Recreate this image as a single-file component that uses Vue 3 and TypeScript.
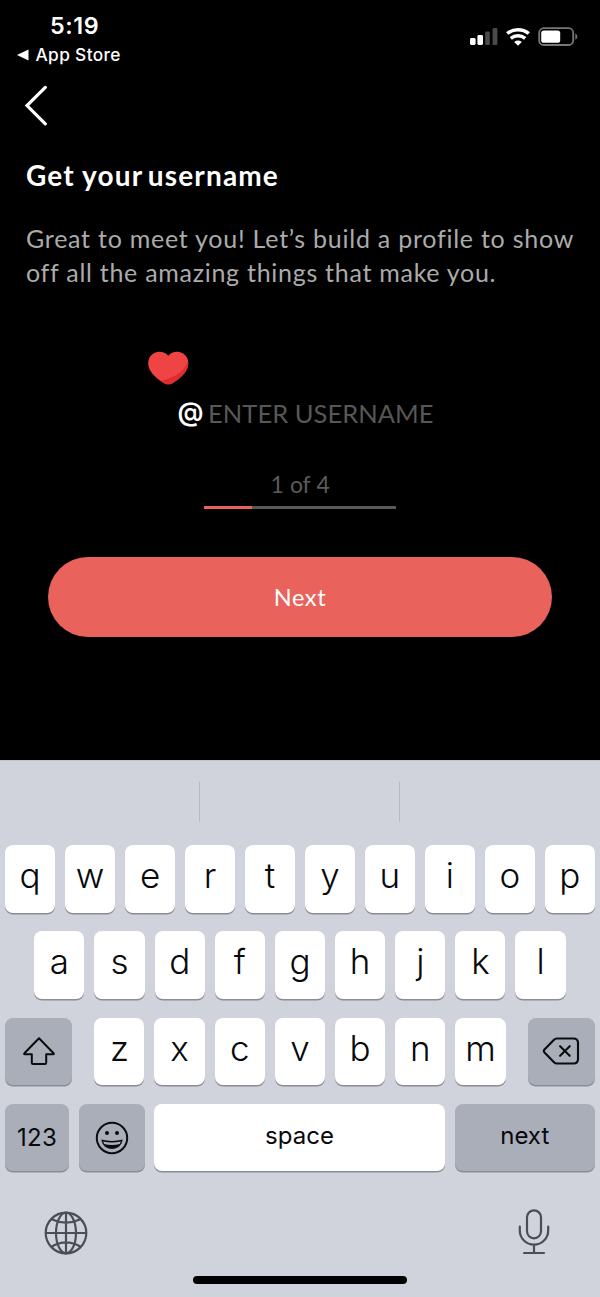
<script setup lang="ts">
const rowTop: string[] = 'qwertyuiop'.split('')
const rowHome: string[] = 'asdfghjkl'.split('')
const rowBottom: string[] = 'zxcvbnm'.split('')
const step = 1
const steps = 4
</script>

<template>
  <div class="screen">
    <main class="app">
      <header class="status">
        <div class="left">
          <div class="time">5:19</div>
          <div class="return">
            <svg width="12" height="12" viewBox="0 0 12 12"><path d="M0 6 11.5 .4V11.6Z" fill="#fff" /></svg>
            <span>App Store</span>
          </div>
        </div>
        <svg class="indicators" width="112" height="24" viewBox="0 0 112 24">
          <rect x="2" y="14" width="5.6" height="7" rx="1.4" fill="#fff" />
          <rect x="9.4" y="11" width="5.6" height="10" rx="1.4" fill="#fff" />
          <rect x="17.2" y="7.5" width="4.6" height="13.5" rx="1.2" fill="#4a4a4a" />
          <rect x="24.6" y="4" width="4.8" height="17" rx="1.2" fill="#4a4a4a" />
          <g fill="none" stroke="#fff" stroke-width="3.5">
            <path d="M39.2 9.5a17.2 17.2 0 0 1 21.6 0" />
            <path d="M42.8 14.3a11.6 11.6 0 0 1 14.4 0" />
          </g>
          <path d="M46.200 17.900a6.400 6.400 0 0 1 7.600 0L50 21.800Z" fill="#fff" />
          <rect x="71.200" y="4.200" width="34" height="16.800" rx="4.600" fill="none" stroke="#777" stroke-width="1.800" />
          <rect x="73.200" y="6.600" width="19" height="12.200" rx="2.600" fill="#fff" />
          <path d="M107.300 9.400c2.600 1.200 2.600 5.200 0 6.400Z" fill="#777" />
        </svg>
      </header>

      <svg class="back" width="24" height="42" viewBox="0 0 24 42">
        <path d="M21.300 3.400 3 21.600 21.300 39.800" fill="none" stroke="#fff" stroke-width="3.200" stroke-linecap="round" />
      </svg>

      <h1><span class="get">Get your</span><span class="name">username</span></h1>
      <p class="intro"><span class="l1">Great to meet you! Let’s build a profile to show</span><span class="l2">off all the amazing things that make you.</span></p>

      <svg class="heart" width="42" height="36" viewBox="0 0 42 36">
        <path d="M21.300 4.800C25 .2 31.500-.2 36.200 2.600 41.600 6 42.500 13 39.800 18.500 36.800 24.500 30.500 29.500 25 32.400Q21.300 34.200 17.600 32.400C12 29.500 5.700 24.500 2.700 18.500 0 13 .9 6 6.300 2.600 11-.2 17.500.2 21.300 4.800Z" fill="#f04444" />
        <path d="M40.900 9.500C38.500 19.500 29 26 14 30.200L17.600 32.400Q21.300 34.200 25 32.400C30.500 29.500 36.800 24.500 39.800 18.500 41.200 15.600 41.600 12.400 40.900 9.500Z" fill="#de2c30" />
      </svg>

      <div class="field"><span class="at">@</span><span class="placeholder">ENTER USERNAME</span></div>

      <div class="counter">{{ step }} of {{ steps }}</div>
      <div class="track"><div class="fill" :style="{ width: (step / steps) * 100 + '%' }"></div></div>
      <button class="cta">Next</button>
    </main>

    <section class="keyboard">
      <div class="suggestions"><i></i><i></i><i></i></div>
      <div class="row r1"><div v-for="k in rowTop" :key="k" class="key">{{ k }}</div></div>
      <div class="row r2"><div v-for="k in rowHome" :key="k" class="key">{{ k }}</div></div>
      <div class="row r3">
        <div class="key dark wide">
          <svg width="34" height="30" viewBox="0 0 34 30"><path d="M17 2.200 31.600 17.300q.8 1-.5 1H24.200V26.800q0 1.300-1.300 1.300H11.100q-1.300 0-1.300-1.300V18.300H2.900q-1.300 0-.5-1Z" fill="none" stroke="#0b0c0f" stroke-width="2" stroke-linejoin="round" /></svg>
        </div>
        <div class="letters"><div v-for="k in rowBottom" :key="k" class="key">{{ k }}</div></div>
        <div class="key dark wide">
          <svg width="38" height="30" viewBox="0 0 38 30"><g fill="none" stroke="#0b0c0f" stroke-width="2.100" stroke-linejoin="round" stroke-linecap="round"><path d="M15 2.500H31.500q4.500 0 4.500 4.500v16q0 4.500-4.500 4.500H15q-1.800 0-3-1.200L2.500 16.500q-1.400-1.500 0-3l9.500-9.800q1.200-1.200 3-1.200Z" /><path d="m18.100 10.200 9.600 9.600m0-9.600-9.600 9.600" /></g></svg>
        </div>
      </div>
      <div class="row r4">
        <div class="key dark word num">123</div>
        <div class="key dark emoji">
          <svg width="34" height="34" viewBox="0 0 34 34"><circle cx="17" cy="17" r="15.200" fill="none" stroke="#0b0c0f" stroke-width="2" /><circle cx="12" cy="12" r="2" fill="#0b0c0f" /><circle cx="22" cy="12" r="2" fill="#0b0c0f" /><path d="M6.400 18.600Q17 21.400 27.600 18.600C27 24.500 22.500 28 17 28S7 24.500 6.400 18.600Z" fill="#0b0c0f" /><path d="M8.200 20.500Q17 22.600 25.800 20.500L24.800 22.900Q17 24.900 9.200 22.900Z" fill="#aaaeb9" /></svg>
        </div>
        <div class="key word space">space</div>
        <div class="key dark word next">next</div>
      </div>
      <div class="tools">
        <svg width="44" height="44" viewBox="0 0 44 44"><g fill="none" stroke="#4c4e57" stroke-width="2.200"><circle cx="22" cy="22" r="20.300" /><ellipse cx="22" cy="22" rx="10" ry="20.300" /><path d="M22 1.700V42.300M1.700 22H42.300M7.500 8.300Q22 15 36.500 8.300M7.500 35.700Q22 27 36.500 35.700" /></g></svg>
        <svg width="32" height="46" viewBox="0 0 32 46"><g fill="none" stroke="#4c4e57" stroke-width="2.200" stroke-linecap="round"><rect x="9" y="1.300" width="14" height="28" rx="7" /><path d="M1.800 17.500V21.500a14.200 14.200 0 0 0 28.400 0V17.500M16 35.700V44M6 44H26" /></g></svg>
      </div>
      <div class="home"></div>
    </section>
  </div>
</template>

<style>
body { margin: 0; background: #000; }
</style>

<style scoped>
.screen { width: 600px; height: 1297px; overflow: hidden; }
.screen * { box-sizing: border-box; }
svg { display: block; flex: none; }
.app { height: 760px; background: #000; color: #fff; font-family: Lato, "Open Sans", sans-serif; display: flex; flex-direction: column; white-space: nowrap; }
.status { height: 84px; display: flex; justify-content: space-between; padding: 12px 20px 0 17px; font-family: Inter, sans-serif; }
.time { margin-left: 33px; font-size: 23.300px; line-height: 27px; font-weight: 600; letter-spacing: .6px; }
.return { display: flex; align-items: center; gap: 6.500px; margin-top: 5px; font-size: 17.300px; line-height: 22px; font-weight: 500; letter-spacing: .35px; }
.indicators { margin-top: 12px; }
.back { margin: 0 0 0 24px; }
h1 { margin: 32px 0 0 26px; font-size: 28px; line-height: 34px; font-weight: 700; display: flex; gap: 4.500px; }
.get { letter-spacing: 1.150px; }
.name { letter-spacing: 1.150px; }
.intro { margin: 29px 0 0 26px; font-size: 25px; line-height: 34.300px; color: #ababab; }
.intro span { display: block; }
.l1 { letter-spacing: .750px; }
.l2 { letter-spacing: .720px; }
.heart { margin: 61px 0 0 147px; }
.field { height: 34px; margin: 9.400px 0 0 177.500px; display: flex; line-height: 34px; font-size: 25.500px; }
.at { width: 30.500px; font-family: Inter, sans-serif; font-weight: 600; font-size: 26px; line-height: 32px; }
.placeholder { color: #575757; letter-spacing: .05px; }
.counter { margin-top: 40px; text-align: center; font-size: 23px; line-height: 28px; color: #5b5b5b; letter-spacing: -.3px; word-spacing: 1px; }
.track { width: 192px; height: 3px; margin: 8px auto 0; background: #585858; }
.fill { height: 3px; background: #e9625c; }
.cta { width: 504px; height: 80px; margin: 48px auto 0; padding: 0; border: 0; border-radius: 40px; background: #e9625c; color: #fff; font: 400 23.500px/78px Lato, sans-serif; letter-spacing: .6px; }

.keyboard { height: 537px; background: #d0d3dc; color: #08090b; font-family: Inter, sans-serif; border-top: 1px solid #c3c4cc; display: flex; flex-direction: column; }
.suggestions { height: 84px; display: grid; grid-template-columns: 200px 200px 200px; padding-top: 21px; }
.suggestions i { height: 40px; border-right: 1px solid #b7bac4; }
.suggestions i:last-child { border: 0; }
.row { display: flex; height: 67.500px; margin-bottom: 18.800px; flex: none; }
.key { width: 50.200px; height: 67.500px; border-radius: 8px; background: #fff; box-shadow: 0 1.500px 0 #8b8d94; display: flex; justify-content: center; font-size: 35px; font-weight: 300; line-height: 61px; }
.r1, .r2 { justify-content: space-between; }
.r1 { padding: 0 5px; }
.r2 { padding: 0 34.300px; }
.r3 { padding: 0 5px; justify-content: space-between; }
.letters { width: 411.400px; display: flex; justify-content: space-between; }
.r4 { padding: 0 5px; margin-bottom: 0; }
.dark { background: #aaaeb9; align-items: center; }
.wide { width: 67px; }
.word { font-size: 24px; font-weight: 400; line-height: 63px; }
.num { width: 64px; margin-right: 10px; line-height: 67px; letter-spacing: .3px; }
.emoji { width: 66px; margin-right: 9px; }
.space { width: 291px; margin-right: 10px; }
.next { width: 139.500px; align-items: flex-start; }
.tools { display: flex; justify-content: space-between; padding: 40px 50px 0 44px; height: 105px; }
.tools svg:last-child { margin-top: -2px; }
.home { width: 214px; height: 8px; border-radius: 4px; background: #000; margin: 0 auto; }
</style>
